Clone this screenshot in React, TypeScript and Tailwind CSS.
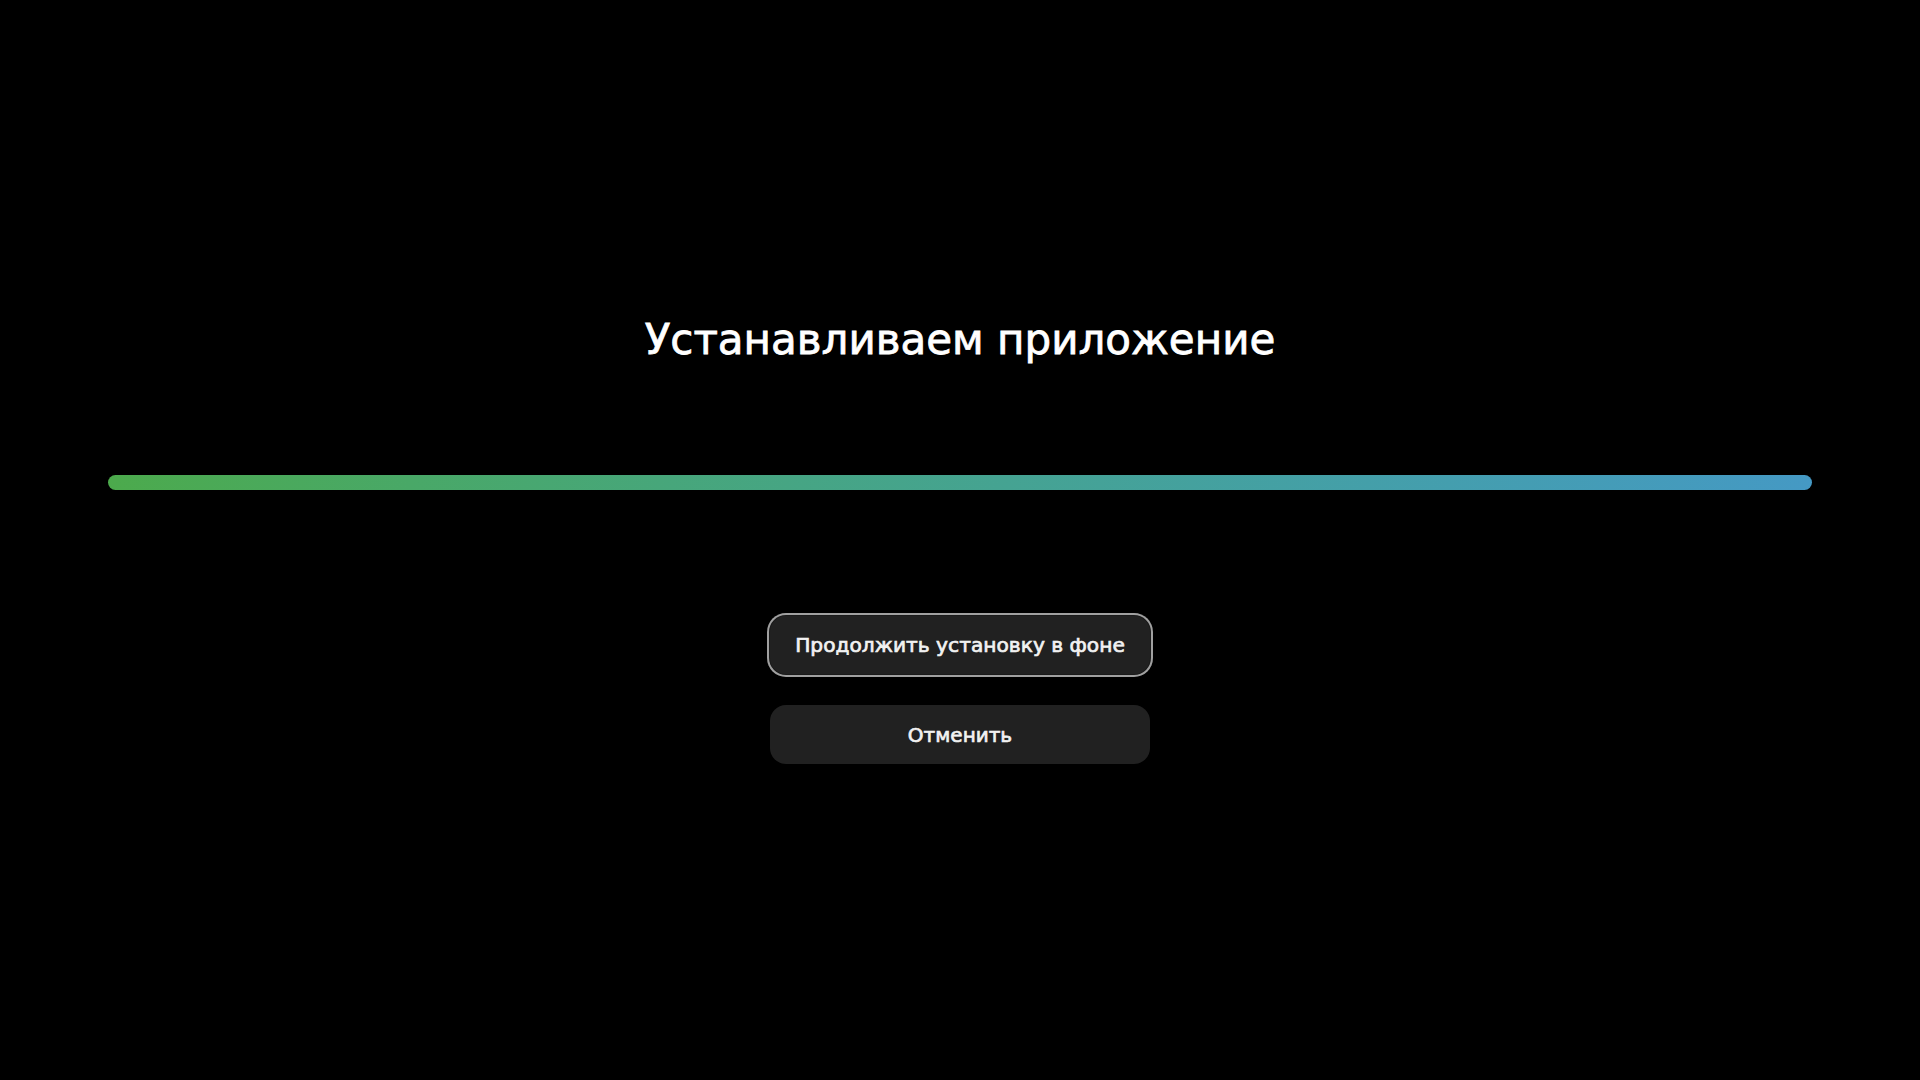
import React from 'react';

export default function App() {
  return (
    <div className="min-h-screen bg-black flex flex-col items-center pt-[315px] font-['DejaVu_Sans',sans-serif] text-white">
      <h1 className="text-[42px] leading-[49px] font-normal [-webkit-text-stroke:0.8px_white]">Устанавливаем приложение</h1>

      <div className="w-full px-[108px] mt-[111px]">
        <div className="h-[15px] w-full rounded-full bg-gradient-to-r from-[#4caa4c] to-[#4599c4]" />
      </div>

      <div className="mt-[126px] flex flex-col items-center gap-[31px]">
        <button className="w-[380px] h-[58px] rounded-[16px] bg-[#212121] shadow-[0_0_0_1px_#1a1a1a,0_0_0_3px_#a0a0a0] text-[20.2px] text-[#f2f2f2] [-webkit-text-stroke:0.7px_#f2f2f2]">
          Продолжить установку в фоне
        </button>
        <button className="w-[380px] h-[59px] rounded-[16px] bg-[#212121] text-[20px] text-[#f2f2f2] [-webkit-text-stroke:0.7px_#f2f2f2]">
          Отменить
        </button>
      </div>
    </div>
  );
}
